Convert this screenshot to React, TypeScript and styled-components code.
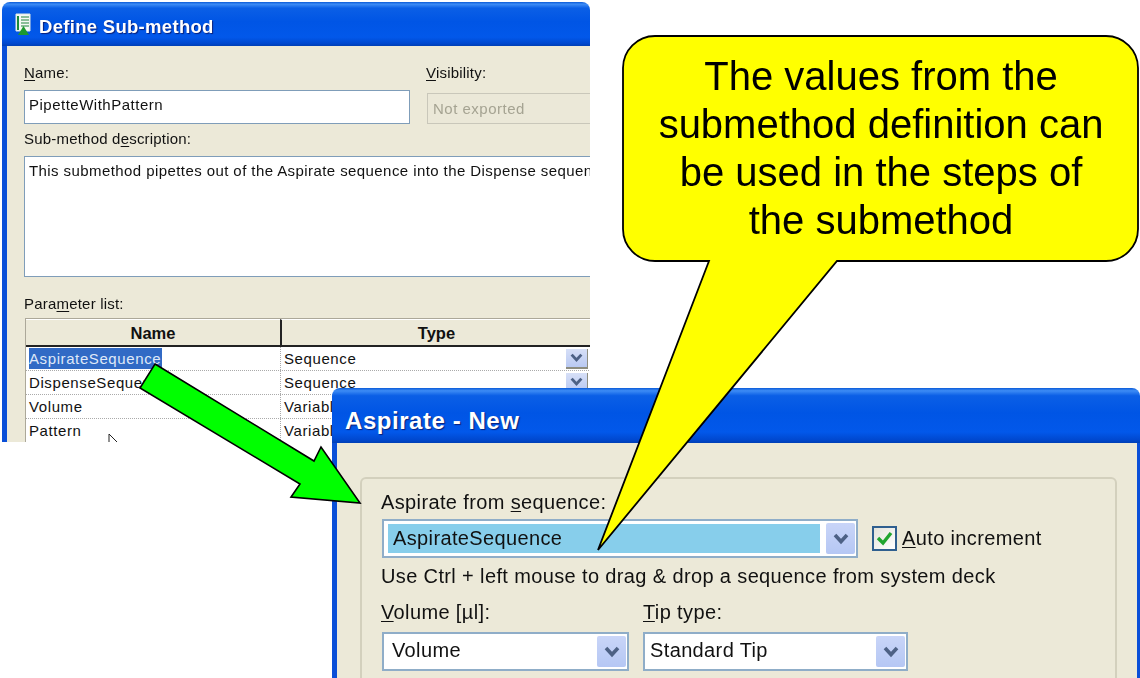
import React from "react";
import styled, { createGlobalStyle } from "styled-components";

const GlobalStyle = createGlobalStyle`
  html, body {
    margin: 0;
    padding: 0;
    background: #fff;
  }
  u {
    text-underline-offset: 2px;
    text-decoration-thickness: 1px;
  }
`;

const Page = styled.div`
  position: relative;
  width: 1140px;
  height: 678px;
  overflow: hidden;
  background: #fff;
  font-family: "Liberation Sans", Arial, sans-serif;
`;

const Overlay = styled.svg`
  position: absolute;
  left: 0;
  top: 0;
  pointer-events: none;
`;

/* ---------- XP window chrome ---------- */

const Window = styled.div<{ $left: number; $top: number; $width: number; $height: number }>`
  position: absolute;
  left: ${(p) => p.$left}px;
  top: ${(p) => p.$top}px;
  width: ${(p) => p.$width}px;
  height: ${(p) => p.$height}px;
  display: flex;
  flex-direction: column;
  overflow: hidden;
  border-radius: 8px 8px 0 0;
  filter: blur(0.45px);
`;

const TitleBar = styled.div<{ $height: number; $size: number; $spacing: number; $drop: number }>`
  flex: none;
  height: ${(p) => p.$height}px;
  display: flex;
  align-items: center;
  gap: 7px;
  padding-left: 13px;
  padding-top: ${(p) => p.$drop}px;
  box-sizing: border-box;
  background: linear-gradient(
    180deg,
    #0a5ad8 0%,
    #3d8cf5 5%,
    #0b5fe6 14%,
    #0055e5 45%,
    #0258ea 80%,
    #0048cf 94%,
    #003fb5 100%
  );
  color: #fff;
  font-weight: 700;
  font-size: ${(p) => p.$size}px;
  letter-spacing: ${(p) => p.$spacing}px;
  text-shadow: 1px 1px 1px #0a1f78;
  svg {
    margin-top: -${(p) => p.$drop}px;
  }
`;

const WindowBody = styled.div<{ $rightBorder?: number }>`
  flex: 1;
  min-height: 0;
  overflow: hidden;
  box-sizing: border-box;
  background: #ece9d8;
  border-left: 5px solid #0a4fd8;
  border-right: ${(p) => p.$rightBorder ?? 0}px solid #0a4fd8;
`;

/* ---------- first dialog ---------- */

const SmallForm = styled.div`
  padding: 17px 0 0 17px;
  color: #111;
  font-size: 15px;
`;

const NameRow = styled.div`
  display: flex;
  gap: 16px;
`;

const FieldColumn = styled.div<{ $width: number }>`
  flex: none;
  width: ${(p) => p.$width}px;
`;

const SmallLabel = styled.div<{ $top?: number; $bottom?: number }>`
  height: 20px;
  line-height: 20px;
  margin-top: ${(p) => p.$top ?? 0}px;
  margin-bottom: ${(p) => p.$bottom ?? 0}px;
  white-space: nowrap;
  letter-spacing: 0.2px;
`;

const TextInput = styled.div<{ $disabled?: boolean }>`
  box-sizing: border-box;
  height: ${(p) => (p.$disabled ? 31 : 34)}px;
  margin-left: ${(p) => (p.$disabled ? 1 : 0)}px;
  padding: 0 ${(p) => (p.$disabled ? 5 : 4)}px;
  line-height: ${(p) => (p.$disabled ? 30 : 28)}px;
  border: 1px solid ${(p) => (p.$disabled ? "#c9c7ba" : "#7f9db9")};
  background: ${(p) => (p.$disabled ? "#ebe8d8" : "#fff")};
  color: ${(p) => (p.$disabled ? "#a5a392" : "#111")};
  letter-spacing: 0.5px;
  white-space: nowrap;
`;

const TextArea = styled.div`
  box-sizing: border-box;
  width: 580px;
  height: 121px;
  padding: 3px 4px;
  line-height: 22px;
  border: 1px solid #7f9db9;
  background: #fff;
  white-space: nowrap;
  overflow: hidden;
  letter-spacing: 0.42px;
`;

const ParamTable = styled.div`
  position: relative;
  width: 565px;
  margin: 4px 0 0 1px;
  background: #fff;
  border-left: 1px solid #aca899;
  border-top: 1px solid #aca899;
`;

const HeaderRow = styled.div`
  display: grid;
  grid-template-columns: 254px 1fr;
  height: 28px;
  box-sizing: border-box;
  border-bottom: 2px solid #222;
  background: #ece9d8;
`;

const HeaderCell = styled.div`
  text-align: center;
  font-weight: 700;
  font-size: 16.5px;
  line-height: 26px;
  color: #111;
  border-top: 1px solid #fff;
  & + & {
    border-left: 2px solid #222;
  }
`;

const ParamRow = styled.div`
  display: grid;
  grid-template-columns: 254px 1fr;
  height: 24px;
  box-sizing: border-box;
  border-bottom: 1px dotted #aaa;
`;

const ParamCell = styled.div`
  position: relative;
  padding-left: 3px;
  line-height: 23px;
  font-size: 15px;
  letter-spacing: 0.6px;
  color: #111;
  white-space: nowrap;
  overflow: hidden;
  & + & {
    border-left: 1px dotted #aaa;
  }
`;

const SelectedText = styled.span`
  display: inline-block;
  background: #316ac5;
  color: #dfe8f8;
  padding: 0 1px 0 0;
  height: 21px;
  line-height: 21px;
`;

const CellButton = styled.div`
  position: absolute;
  right: 3px;
  top: 2px;
  width: 22px;
  height: 20px;
  display: flex;
  align-items: center;
  justify-content: center;
  background: linear-gradient(180deg, #d6dff7, #b9c9f2);
  border-right: 1px solid #8d8d80;
  border-bottom: 2px solid #8d8d80;
  box-sizing: border-box;
`;

const CursorMark = styled.svg`
  position: absolute;
  left: 82px;
  top: 114px;
`;

/* ---------- second dialog ---------- */

const GroupBox = styled.div`
  box-sizing: border-box;
  width: 757px;
  height: 300px;
  margin: 34px 0 0 23px;
  padding: 11px 0 0 19px;
  border: 2px solid #d3d0bd;
  border-radius: 6px;
  color: #111;
  font-size: 20px;
  letter-spacing: 0.37px;
`;

const BigLabel = styled.div`
  height: 24px;
  line-height: 24px;
  white-space: nowrap;
`;

const ComboRow = styled.div`
  display: flex;
  align-items: center;
  margin-top: 5px;
  padding-left: 1px;
`;

const ComboBox = styled.div<{ $width: number }>`
  flex: none;
  box-sizing: border-box;
  width: ${(p) => p.$width}px;
  height: 39px;
  display: flex;
  align-items: stretch;
  padding: 2px 1px 2px 2px;
  border: 2px solid #8fadc8;
  background: #fff;
`;

const ComboValue = styled.div<{ $pad: number; $highlight?: boolean }>`
  flex: 1;
  margin: ${(p) => (p.$highlight ? "1px 6px 1px 2px" : "0 3px 0 0")};
  padding-left: ${(p) => p.$pad}px;
  line-height: 29px;
  background: ${(p) => (p.$highlight ? "#87ceeb" : "#fff")};
  white-space: nowrap;
`;

const DropButton = styled.div`
  flex: none;
  width: 29px;
  display: flex;
  align-items: center;
  justify-content: center;
  border-radius: 2px;
  background: linear-gradient(180deg, #c9d5f8, #b5c7f4);
`;

const CheckField = styled.label`
  display: flex;
  align-items: center;
  gap: 5px;
  margin-left: 14px;
`;

const CheckBox = styled.div`
  flex: none;
  box-sizing: border-box;
  width: 25px;
  height: 25px;
  display: flex;
  align-items: center;
  justify-content: center;
  border: 2px solid #2f5f8f;
  background: linear-gradient(135deg, #e4e3da, #fff);
`;

const HintLine = styled.div`
  height: 24px;
  line-height: 24px;
  margin-top: 6px;
  white-space: nowrap;
`;

const ColumnsRow = styled.div`
  display: flex;
  gap: 14px;
  margin-top: 12px;
`;

const ComboColumn = styled.div<{ $width: number; $inset?: number }>`
  flex: none;
  width: ${(p) => p.$width}px;
  display: flex;
  flex-direction: column;
  gap: 8px;
  ${ComboBox} {
    margin-left: ${(p) => p.$inset ?? 0}px;
  }
`;

/* ---------- callout ---------- */

const CalloutText = styled.div`
  position: absolute;
  left: 623px;
  top: 52px;
  width: 516px;
  text-align: center;
  font-size: 40px;
  line-height: 48px;
  color: #000;
`;

const Chevron = ({ size = 16 }: { size?: number }) => (
  <svg width={size} height={size * 0.75} viewBox="0 0 16 12">
    <path d="M2 2 L8 8.5 L14 2" fill="none" stroke="#4d6185" strokeWidth="3.6" />
  </svg>
);

const WindowIcon = () => (
  <svg width="17" height="23" viewBox="0 0 17 23">
    <path d="M1 1 H15 V18 H1 Z" fill="#f4f8f4" stroke="#dfe8e0" />
    <path d="M3 3 V17" stroke="#1a8a3a" strokeWidth="2" />
    <path d="M6 4 H14 M6 7 H14 M6 10 H14 M6 13 H14" stroke="#66a97a" strokeWidth="1.4" />
    <path d="M3 22 L8.5 13 L14 22 Z" fill="#1c9a2e" />
  </svg>
);

const rows = [
  { name: "AspirateSequence", type: "Sequence", selected: true, button: true },
  { name: "DispenseSequence", type: "Sequence", button: true },
  { name: "Volume", type: "Variable" },
  { name: "Pattern", type: "Variable" },
];

const App: React.FC = () => {
  return (
    <Page>
      <GlobalStyle />

      <Window $left={2} $top={2} $width={588} $height={440}>
        <TitleBar $height={44} $size={18.5} $spacing={0.3} $drop={6}>
          <WindowIcon />
          Define Sub-method
        </TitleBar>
        <WindowBody>
          <SmallForm>
            <NameRow>
              <FieldColumn $width={386}>
                <SmallLabel $bottom={7}>
                  <u>N</u>ame:
                </SmallLabel>
                <TextInput>PipetteWithPattern</TextInput>
              </FieldColumn>
              <FieldColumn $width={170}>
                <SmallLabel $bottom={10}>
                  <u>V</u>isibility:
                </SmallLabel>
                <TextInput $disabled>Not exported</TextInput>
              </FieldColumn>
            </NameRow>
            <SmallLabel $top={5} $bottom={7}>
              Sub-method d<u>e</u>scription:
            </SmallLabel>
            <TextArea>
              This submethod pipettes out of the Aspirate sequence into the Dispense sequence
            </TextArea>
            <SmallLabel $top={17}>
              Para<u>m</u>eter list:
            </SmallLabel>
            <ParamTable>
              <HeaderRow>
                <HeaderCell>Name</HeaderCell>
                <HeaderCell>Type</HeaderCell>
              </HeaderRow>
              {rows.map((row) => (
                <ParamRow key={row.name}>
                  <ParamCell>
                    {row.selected ? <SelectedText>{row.name}</SelectedText> : row.name}
                  </ParamCell>
                  <ParamCell>
                    {row.type}
                    {row.button && (
                      <CellButton>
                        <Chevron size={13} />
                      </CellButton>
                    )}
                  </ParamCell>
                </ParamRow>
              ))}
              <CursorMark width="12" height="12" viewBox="0 0 12 12">
                <path d="M1 1 V11 M1 1 L10 10 H5" fill="none" stroke="#222" strokeWidth="1" />
              </CursorMark>
            </ParamTable>
          </SmallForm>
        </WindowBody>
      </Window>

      <Window $left={332} $top={388} $width={808} $height={290}>
        <TitleBar $height={55} $size={24} $spacing={0.55} $drop={10}>
          Aspirate - New
        </TitleBar>
        <WindowBody $rightBorder={3}>
          <GroupBox>
            <BigLabel>
              Aspirate from <u>s</u>equence:
            </BigLabel>
            <ComboRow>
              <ComboBox $width={476}>
                <ComboValue $pad={5} $highlight>
                  AspirateSequence
                </ComboValue>
                <DropButton>
                  <Chevron />
                </DropButton>
              </ComboBox>
              <CheckField>
                <CheckBox>
                  <svg width="17" height="15" viewBox="0 0 17 15">
                    <path d="M2 7 L7 12 L15 2" fill="none" stroke="#21a52f" strokeWidth="3.4" />
                  </svg>
                </CheckBox>
                <span>
                  <u>A</u>uto increment
                </span>
              </CheckField>
            </ComboRow>
            <HintLine>Use Ctrl + left mouse to drag &amp; drop a sequence from system deck</HintLine>
            <ColumnsRow>
              <ComboColumn $width={248} $inset={1}>
                <BigLabel>
                  <u>V</u>olume [µl]:
                </BigLabel>
                <ComboBox $width={247}>
                  <ComboValue $pad={6}>Volume</ComboValue>
                  <DropButton>
                    <Chevron />
                  </DropButton>
                </ComboBox>
              </ComboColumn>
              <ComboColumn $width={265}>
                <BigLabel>
                  <u>T</u>ip type:
                </BigLabel>
                <ComboBox $width={265}>
                  <ComboValue $pad={3}>Standard Tip</ComboValue>
                  <DropButton>
                    <Chevron />
                  </DropButton>
                </ComboBox>
              </ComboColumn>
            </ColumnsRow>
          </GroupBox>
        </WindowBody>
      </Window>

      <Overlay width="1140" height="678" viewBox="0 0 1140 678">
        <path
          d="M155 364 L314 461 L321 447 L360 503 L291 497 L300 484 L140 388 Z"
          fill="#00ff00"
          stroke="#000"
          strokeWidth="1.6"
          strokeLinejoin="miter"
        />
        <path
          d="M655 36 H1106 A32 32 0 0 1 1138 68 V229 A32 32 0 0 1 1106 261 H837 L598 550 L709 261 H655 A32 32 0 0 1 623 229 V68 A32 32 0 0 1 655 36 Z"
          fill="#ffff00"
          stroke="#000"
          strokeWidth="1.8"
          strokeLinejoin="miter"
        />
      </Overlay>
      <CalloutText>
        The values from the
        <br />
        submethod definition can
        <br />
        be used in the steps of
        <br />
        the submethod
      </CalloutText>
    </Page>
  );
};

export default App;
